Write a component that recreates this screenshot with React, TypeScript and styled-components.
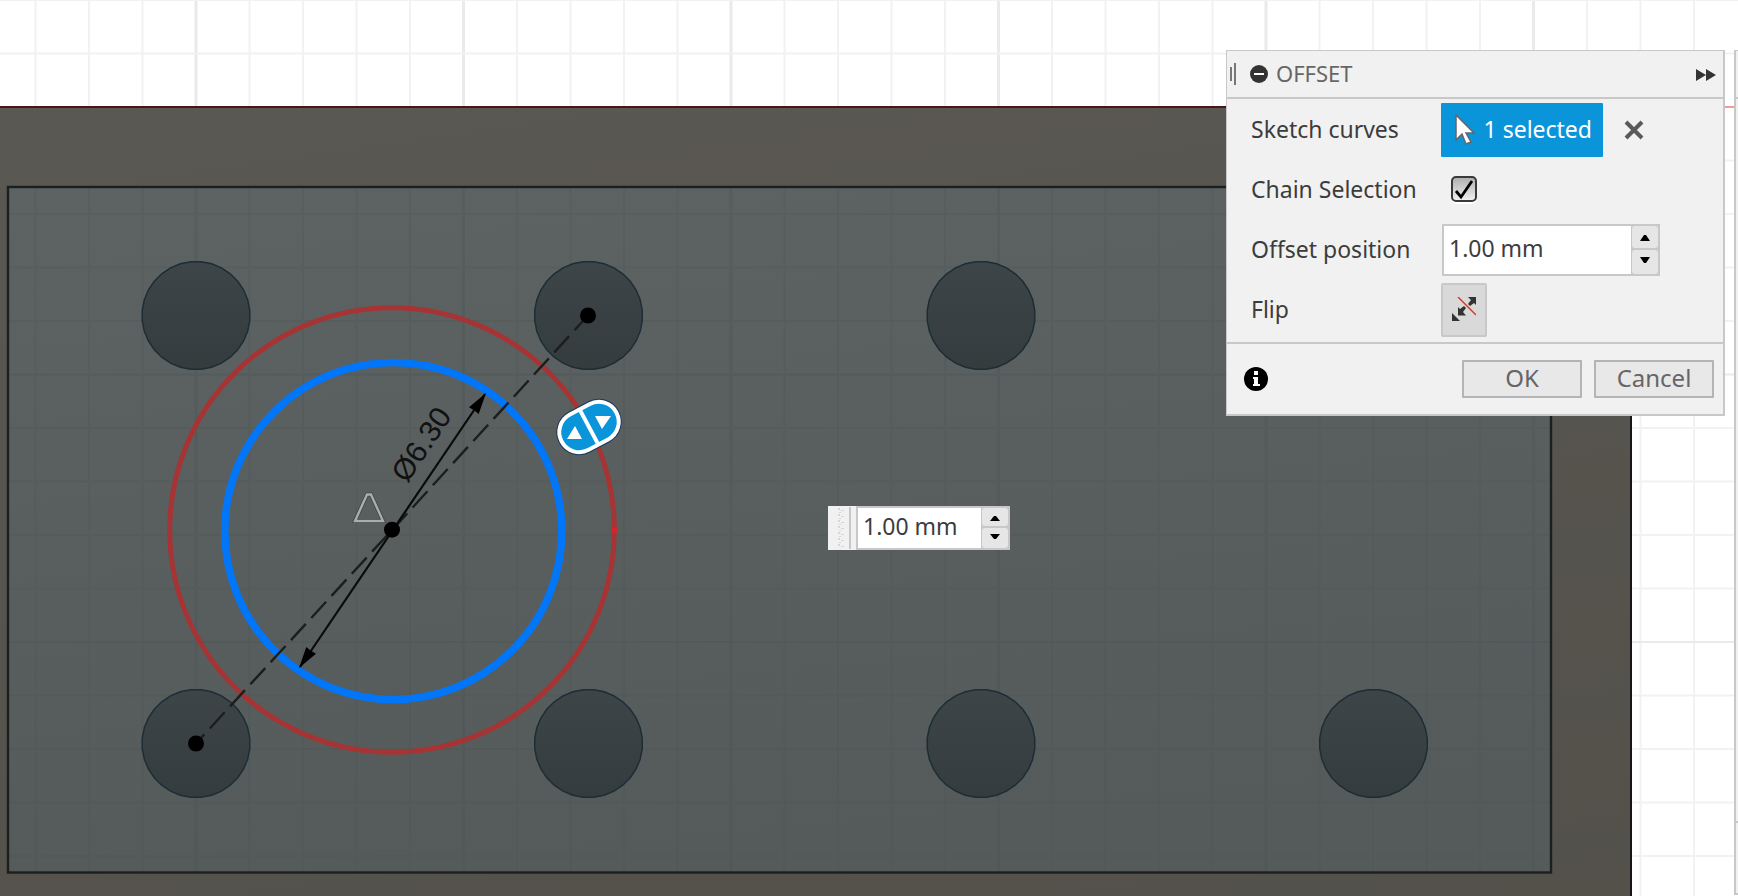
import React, { useState } from "react";
import styled, { createGlobalStyle } from "styled-components";

const GlobalStyle = createGlobalStyle`
  * { box-sizing: border-box; }
  html, body, #root { height: 100%; }
  body { margin: 0; background: #fff; overflow: hidden; }
  button, input { font: inherit; color: inherit; margin: 0; }
`;

const Viewport = styled.main`
  position: relative;
  width: 100%;
  height: 100%;
  overflow: hidden;
  font: 23px/30px "Noto Sans", "Open Sans", sans-serif;
  color: #3c3c3c;
`;

const Canvas = styled.svg`
  display: block;
  position: absolute;
  top: 0;
  left: 0;
`;

const Dialog = styled.form`
  position: absolute;
  top: 50px;
  right: 13px;
  width: 499px;
  background: #f1f1f1;
  border: 1px solid #c8c8c8;
  border-right-width: 2px;
  border-bottom-width: 2px;
`;

const TitleBar = styled.header`
  display: flex;
  align-items: center;
  height: 48px;
  padding: 0 7px 0 3px;
  border-bottom: 2px solid #c8c8c8;
`;

const Title = styled.h1`
  flex: 1;
  margin: 0 0 0 8px;
  padding-bottom: 2px;
  font-size: 22px;
  font-weight: 400;
  color: #666;
`;

const IconButton = styled.button`
  display: flex;
  align-items: center;
  justify-content: center;
  padding: 0;
  border: 0;
  background: none;
`;

const Fields = styled.div`
  display: flex;
  flex-direction: column;
  gap: 6px;
  padding: 4px 24px 5px;
  border-bottom: 2px solid #c8c8c8;
`;

const Field = styled.div`
  display: grid;
  grid-template-columns: 190px 1fr;
  align-items: center;
  height: 54px;
`;

const Label = styled.label`
  padding-bottom: 2px;
`;

const Controls = styled.div`
  display: flex;
  align-items: center;
`;

const SelectionButton = styled.button`
  display: flex;
  align-items: center;
  justify-content: space-between;
  width: 162px;
  height: 54px;
  padding: 0 11px 0 14px;
  border: 0;
  border-radius: 1px;
  background: #0a95da;
  color: #fff;
`;

const SelectionCount = styled.span`
  padding-bottom: 2px;
`;

const ClearButton = styled(IconButton)`
  width: 22px;
  height: 22px;
  margin-left: 20px;
`;

const Check = styled.input`
  appearance: none;
  width: 26px;
  height: 26px;
  margin: 0 0 2px 10px;
  border: 2px solid #3a3a3a;
  border-radius: 5px;
  background: linear-gradient(#b0b0b0, #f0f0f0);
  box-shadow: 0 2px 0 #fff;
  &:checked {
    background:
      url("data:image/svg+xml,%3Csvg xmlns='http://www.w3.org/2000/svg' viewBox='0 0 22 22'%3E%3Cpath d='M3 13l5 6L19 3' fill='none' stroke='%23000' stroke-width='2.8'/%3E%3C/svg%3E"),
      linear-gradient(#b0b0b0, #f0f0f0);
  }
`;

const Spinner = styled.div<{ $compact?: boolean }>`
  display: flex;
  width: ${(p) => (p.$compact ? 154 : 218)}px;
  height: ${(p) => (p.$compact ? 44 : 52)}px;
  margin-left: ${(p) => (p.$compact ? 0 : 1)}px;
  border: 2px solid #c8c8c8;
  background: #fff;
`;

const SpinnerInput = styled.input`
  flex: 1;
  min-width: 0;
  padding: 0 0 4px 5px;
  border: 0;
  outline: 0;
  background: #fff;
`;

const Steps = styled.div`
  display: flex;
  flex-direction: column;
  gap: 2px;
  width: 27px;
  padding-left: 1px;
  background: #c8c8c8;
`;

const Step = styled(IconButton)<{ $down?: boolean }>`
  flex: 1;
  padding: ${(p) => (p.$down ? "0 0 4px" : "2px 0 0")};
  border-radius: 3px;
  background: #e6e6e6;
`;

const FlipButton = styled(IconButton)`
  width: 46px;
  height: 54px;
  border: 2px solid #c8c8c8;
  border-radius: 2px;
  background: #d9d9d9;
`;

const Footer = styled.footer`
  display: flex;
  align-items: center;
  gap: 12px;
  height: 70px;
  padding: 0 9px 0 17px;
`;

const Spacer = styled.span`
  flex: 1;
`;

const ActionButton = styled.button`
  width: 120px;
  height: 38px;
  padding: 0 0 2px;
  border: 2px solid #b4b4b4;
  border-radius: 1px;
  background: #e8e8e8;
  color: #666;
  font-size: 24px;
  line-height: 32px;
`;

const FloatingValue = styled.div`
  position: absolute;
  top: 506px;
  left: 828px;
  display: flex;
  background: #f1f1f1;
`;

const Grip = styled.div`
  display: flex;
  align-items: center;
  justify-content: space-between;
  width: 28px;
  padding: 0 5px 0 9px;
`;

const SidePanel = styled.aside`
  position: absolute;
  top: 50px;
  right: 0;
  width: 4px;
  height: 845px;
  display: flex;
  flex-direction: column;
  border: solid #c8c8c8;
  border-width: 1px 0 2px 2px;
  background: #f1f1f1;
`;

const SideSection = styled.div<{ $grow?: boolean }>`
  flex: ${(p) => (p.$grow ? "1" : "0 0 auto")};
  height: ${(p) => (p.$grow ? "auto" : "48px")};
  border-bottom: 2px solid #c8c8c8;
`;

const SideFoot = styled.div`
  height: 70px;
`;

const PITCH = 53.5;
const ORIGIN = { x: 196, y: 107 };
const HOLES = [
  [196, 315.5], [588.5, 315.5], [981, 315.5],
  [196, 743.5], [588.5, 743.5], [981, 743.5], [1373.5, 743.5],
];

/* Holes are drawn as the many-sided outline the viewport tessellates to. */
function facets(cx: number, cy: number, r: number) {
  const n = 32;
  return Array.from({ length: n }, (_, i) => {
    const a = ((i + 0.5) / n) * Math.PI * 2;
    return `${(cx + r * Math.cos(a)).toFixed(2)},${(cy + r * Math.sin(a)).toFixed(2)}`;
  }).join(" ");
}

function GridLines({ color, major }: { color: string; major: string }) {
  const columns = Array.from({ length: 60 }, (_, i) => i - 3);
  const rows = Array.from({ length: 40 }, (_, i) => i - 2);
  return (
    <g strokeWidth="2">
      {columns.map((i) => (
        <line key={`c${i}`} x1={ORIGIN.x + i * PITCH} x2={ORIGIN.x + i * PITCH} y1="0" y2="2200" stroke={i % 5 === 0 ? major : color} strokeWidth={i % 5 === 0 ? 3 : 2} />
      ))}
      {rows.map((i) => (
        <line key={`r${i}`} y1={ORIGIN.y + i * PITCH} y2={ORIGIN.y + i * PITCH} x1="0" x2="3200" stroke={i % 5 === 0 ? major : color} />
      ))}
    </g>
  );
}

function SketchCanvas() {
  return (
    <Canvas width="100%" height="100%" role="img" aria-label="Sketch viewport">
      <defs>
        <linearGradient id="body" x1="0" y1="0" x2="0.2" y2="1">
          <stop offset="0" stopColor="#5a5852" />
          <stop offset="1" stopColor="#524f49" />
        </linearGradient>
        <linearGradient id="pocket" x1="0" y1="0" x2="0.2" y2="1">
          <stop offset="0" stopColor="#5d6363" />
          <stop offset="1" stopColor="#555b5a" />
        </linearGradient>
        <linearGradient id="hole" x1="0" y1="0" x2="0" y2="1">
          <stop offset="0" stopColor="#3e4548" />
          <stop offset="1" stopColor="#353c3e" />
        </linearGradient>
      </defs>
      <GridLines color="#f2f2f2" major="#eaeaea" />
      <line x1="1631" x2="3200" y1="107" y2="107" stroke="#f09a9a" strokeWidth="2" />
      <rect x="-10" y="107" width="1641" height="1200" fill="url(#body)" stroke="#151515" strokeWidth="2" />
      <line x1="0" x2="1631" y1="107" y2="107" stroke="#4a1517" strokeWidth="2" />
      <svg x="8" y="187" width="1543" height="686" viewBox="8 187 1543 686">
        <rect x="8" y="187" width="1543" height="686" fill="url(#pocket)" />
        <g opacity="0.25"><GridLines color="#4c5454" major="#445054" /></g>
      </svg>
      <rect x="8" y="187" width="1543" height="685.5" fill="none" stroke="#1b1f20" strokeWidth="2.4" />
      {HOLES.map(([x, y]) => (
        <polygon key={`${x}-${y}`} points={facets(x, y, 54)} fill="url(#hole)" stroke="#1c2d36" strokeWidth="1.5" />
      ))}
      <circle cx="392" cy="530" r="222.3" fill="none" stroke="#a63434" strokeWidth="5" />
      <circle cx="614.5" cy="530" r="3" fill="#d8232a" />
      <circle cx="393.3" cy="531" r="168.5" fill="none" stroke="#0276f8" strokeWidth="7.5" />
      <path d="M588 315.5L392 530L196 743.5" fill="none" stroke="#1c1e1e" strokeWidth="2.4" strokeDasharray="22 8" strokeDashoffset="2" />
      <path d="M485 394L300 667" stroke="#0a0a0a" strokeWidth="2.2" />
      <path d="M486 393l-7.3 21-4.2-3.4-5.5-3.3zM299 668l7.3-21 4.2 3.4 5.5 3.3z" fill="#000" />
      <g fill="#000">
        <circle cx="588" cy="315.5" r="8" />
        <circle cx="392" cy="529.7" r="8" />
        <circle cx="196" cy="743.5" r="8" />
      </g>
      <path d="M367 494.500h4l12 26.500h-28z" fill="none" stroke="#3f4444" strokeWidth="4" />
      <path d="M367 494.500h4l12 26.500h-28z" fill="none" stroke="#a9adad" strokeWidth="2.4" />
      <text transform="translate(407 484) rotate(-56)" fontFamily="Liberation Sans, sans-serif" fontSize="30" fill="#111">Ø6.30</text>
      <g transform="translate(589 427) rotate(-28)">
        <rect x="-34" y="-23" width="68" height="46" rx="23" fill="#17375c" />
        <rect x="-31" y="-20" width="62" height="40" rx="20" fill="#0a95da" stroke="#fff" strokeWidth="4" />
        <path d="M0-20V20" stroke="#fff" strokeWidth="4" />
      </g>
      <path d="M567 439l8-13 7 13zM595 416h16l-9 13z" fill="#fff" />
    </Canvas>
  );
}

function ValueSpinner({ id, label, compact }: { id: string; label?: string; compact?: boolean }) {
  const [value, setValue] = useState("1.00 mm");
  const nudge = (by: number) => setValue((v) => `${(parseFloat(v) + by || 0).toFixed(2)} mm`);
  const arrow = compact ? 5 : 6;
  return (
    <Spinner $compact={compact}>
      <SpinnerInput id={id} aria-label={label} value={value} onChange={(e) => setValue(e.target.value)} />
      <Steps>
        <Step type="button" aria-label="Increase" onClick={() => nudge(1)}>
          <svg width="10" height={arrow} viewBox="0 0 10 6" preserveAspectRatio="none"><path d="M0 6l4-6h2l4 6z" /></svg>
        </Step>
        <Step type="button" aria-label="Decrease" $down onClick={() => nudge(-1)}>
          <svg width="10" height={arrow} viewBox="0 0 10 6" preserveAspectRatio="none"><path d="M0 0l4 6h2l4-6z" /></svg>
        </Step>
      </Steps>
    </Spinner>
  );
}

export default function App() {
  return (
    <>
      <GlobalStyle />
      <Viewport>
        <SketchCanvas />
        <FloatingValue>
          <Grip>
            <svg width="8" height="40" fill="#d6d6d6">
              {Array.from({ length: 7 }, (_, i) => (
                <path key={i} d={`M1 ${i * 6}h2v2h-2zM4 ${i * 6 + 2}h3v1h-3zM2 ${i * 6 + 4}h2v1h-2z`} />
              ))}
            </svg>
            <svg width="2" height="42"><path d="M0 0h2v42h-2z" fill="#c8c8c8" /></svg>
          </Grip>
          <ValueSpinner id="floating-offset" label="Offset distance" compact />
        </FloatingValue>
        <Dialog onSubmit={(e) => e.preventDefault()}>
          <TitleBar>
            <svg width="20" height="22"><path d="M1 4v14M5 0v22" stroke="#777" strokeWidth="2" /></svg>
            <IconButton type="button" aria-label="Collapse">
              <svg width="18" height="18"><circle cx="9" cy="9" r="9" fill="#333" /><path d="M4 9h10" stroke="#fff" strokeWidth="2" /></svg>
            </IconButton>
            <Title>OFFSET</Title>
            <IconButton type="button" aria-label="Dock panel">
              <svg width="20" height="14"><path d="M0 2l10 6-10 6zM10 2l10 6-10 6z" fill="#333" /></svg>
            </IconButton>
          </TitleBar>
          <Fields>
            <Field>
              <Label htmlFor="curves">Sketch curves</Label>
              <Controls>
                <SelectionButton id="curves" type="button">
                  <svg width="20" height="32"><path d="M1 1v25l6-6 4 10 5-2-5-9h8z" fill="#fff" stroke="#666" strokeWidth="1.5" /></svg>
                  <SelectionCount>1 selected</SelectionCount>
                </SelectionButton>
                <ClearButton type="button" aria-label="Clear selection">
                  <svg width="20" height="20"><path d="M2 2l16 16M18 2L2 18" stroke="#5a5a5a" strokeWidth="4" /></svg>
                </ClearButton>
              </Controls>
            </Field>
            <Field>
              <Label htmlFor="chain">Chain Selection</Label>
              <Controls><Check id="chain" type="checkbox" defaultChecked /></Controls>
            </Field>
            <Field>
              <Label htmlFor="offset">Offset position</Label>
              <Controls><ValueSpinner id="offset" /></Controls>
            </Field>
            <Field>
              <Label htmlFor="flip">Flip</Label>
              <Controls>
                <FlipButton id="flip" type="button">
                  <svg width="24" height="26">
                    <path d="M16 0h8v8l-2-2-4 3-2-2 3-4zM6 10l2 2 4-3 2 2-3 4 3 3.500H6zM0 16l8 8H0z" fill="#333" />
                    <path d="M6 0l18 18" stroke="#d8371c" strokeWidth="1.4" />
                  </svg>
                </FlipButton>
              </Controls>
            </Field>
          </Fields>
          <Footer>
            <IconButton type="button" aria-label="Information">
              <svg width="24" height="24"><circle cx="12" cy="12" r="12" /><path d="M10 4h4v4h-4zM9 10h5v7h2v2h-7v-2h1v-5h-1z" fill="#fff" /></svg>
            </IconButton>
            <Spacer />
            <ActionButton type="submit">OK</ActionButton>
            <ActionButton type="button">Cancel</ActionButton>
          </Footer>
        </Dialog>
        <SidePanel aria-label="Docked panel">
          <SideSection />
          <SideSection $grow />
          <SideFoot />
        </SidePanel>
      </Viewport>
    </>
  );
}
